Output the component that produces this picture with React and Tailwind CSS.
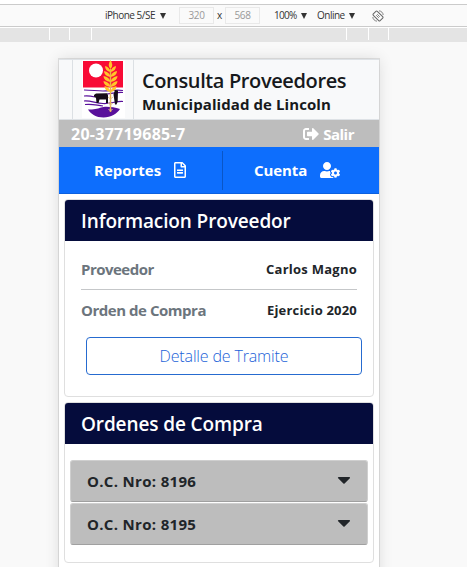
import React from "react";
import { FaSignOutAlt, FaRegFileAlt, FaUserCog, FaCaretDown } from "react-icons/fa";

function Select({ label, className }) {
  return (
    <div className={`flex items-center whitespace-nowrap ${className}`}>
      <span>{label}</span>
      <svg className="ml-auto h-[6px] w-[6px]" viewBox="0 0 6 6"><path d="M0 0h6L3 6z" fill="#333" /></svg>
    </div>
  );
}

function DeviceToolbar() {
  return (
    <div className="mt-1 flex h-[23px] shrink-0 items-center border-y border-[#cbcbcb] bg-[#fafafa] text-[10px] text-[#333]">
      <Select label="iPhone 5/SE" className="ml-[105px] w-[61px] tracking-[-0.5px]" />
      <div className="ml-[13px] flex h-[17px] w-[35px] items-center justify-center border border-[#e9e9e9] text-[10px] tracking-[-0.4px] text-[#999]">320</div>
      <span className="w-[11px] text-center">x</span>
      <div className="flex h-[17px] w-[35px] items-center justify-center border border-[#e9e9e9] text-[10px] tracking-[-0.4px] text-[#999]">568</div>
      <Select label="100%" className="ml-[14px] w-[33px] tracking-[-0.7px]" />
      <Select label="Online" className="ml-[10px] w-[38px] tracking-[-0.5px]" />
      <svg className="ml-[17px] h-3 w-3" viewBox="0 0 12 12" fill="none" stroke="#666">
        <rect x="3.2" y="1.2" width="5.6" height="9.6" rx="1" transform="rotate(-45 6 6)" />
        <path d="M4.2 5.2l2.6 2.6M5.2 4.2l2.6 2.6M7 .8c2.4.3 4 1.900 4.200 4.200M5 11.200C2.600 10.900 1 9.300.8 7" strokeWidth=".8" />
      </svg>
    </div>
  );
}

function Ruler() {
  return (
    <div className="mt-px flex h-[14px] shrink-0 bg-[#e4e4e4]">
      <i className="ml-[49px] h-3 w-px bg-white" />
      <i className="ml-[19px] h-3 w-px bg-white" />
      <i className="ml-[21px] h-3 w-px bg-white" />
      <i className="ml-[254px] h-3 w-px bg-white" />
      <i className="ml-[21px] h-3 w-px bg-white" />
      <i className="ml-[19px] h-3 w-px bg-white" />
    </div>
  );
}

function Shield() {
  return (
    <svg className="h-[58px] w-[43px]" viewBox="0 0 43 58">
      <path d="M0 0h43v58H0z" fill="#fff" />
      <path d="M1 1h40v26.500H1z" fill="#f80b36" />
      <circle cx="14" cy="10.500" r="7" fill="#fff" />
      <path d="M6 49.500c6 0 9-.5 13-2s12-.8 19 1.500c-3 4.500-9 8.500-16.500 8.500S9 54 6 49.500z" fill="#59109b" />
      <path d="M2 30c8 0 12 1 19 1s12-1.500 20-.5M2 36c5-.5 7 0 11 1M25 34c6-.5 10-2 16-1.500M2 41c7-.5 11 2 19 2.500 7 .5 13-2.500 20-2M3 44.500c8-1 12 1 18 1.500" stroke="#59109b" strokeWidth="1.200" fill="none" />
      <path d="M12 35l2-1.500 11-.3 1 2v7.800h-2v-3.500h-6.500l-1 3.500h-2l-.5-5-2-1.500zM33 30l3 .5-.3 11-1.200 3h-1.500l-1.500-10z" fill="#160c18" />
      <path d="M28.500 9v43" stroke="#e8b050" strokeWidth="1.500" />
      <g fill="#ffc629">
        <path d="M28.500 0q-3.500 5 0 9 3.500-4 0-9z" />
        <path d="M28.500 12q-1-5-5.500-6 0 5 5.500 6 5.500-1 5.500-6-4.500 1-5.500 6z" />
        <path d="M28.500 17q-1-5-6.500-6 0 5 6.500 6 6.500-1 6.500-6-5.500 1-6.500 6z" />
        <path d="M28.500 22q-1-5-7-6 0 5 7 6 7-1 7-6-6 1-7 6z" />
        <path d="M28.500 27q-1-5-7-6 0 5 7 6 7-1 7-6-6 1-7 6z" />
        <path d="M28.500 32q-1-5-6-6 0 5 6 6 6-1 6-6-5 1-6 6z" />
      </g>
      <path d="M26 37l2.500 2 2.500-2M26 43l2.500 2 2.500-2M26.500 49l2 2 2-2" stroke="#e8c690" fill="none" />
    </svg>
  );
}

function Card({ title, className, children }) {
  return (
    <section className={`mx-[5px] overflow-hidden rounded border border-[#dfdfdf] bg-white ${className}`}>
      <h2 className="flex h-[41px] items-center bg-[#050c3c] pt-[2px] pl-4 text-[19px] font-semibold tracking-[-0.12px] whitespace-nowrap text-white">{title}</h2>
      {children}
    </section>
  );
}

function Order({ number }) {
  return (
    <div className="flex h-[42px] items-center justify-between rounded-[3px] border border-[#cfcfcf] border-b-[#a0a0a0] bg-[#bdbdbd] px-4 text-[15px] font-bold text-[#212529]">
      <span className="tracking-[0.32px]">O.C. Nro: {number}</span>
      <FaCaretDown className="-mr-[3px] mb-[3px] h-[21px] w-[20px]" />
    </div>
  );
}

export default function App() {
  return (
    <div className="flex h-[567px] w-[467px] flex-col overflow-hidden bg-white font-['Open_Sans','Noto_Sans',sans-serif]">
      <DeviceToolbar />
      <Ruler />
      <div className="min-h-0 flex-1 bg-[#f9f9f9] pt-[17px] pl-[59px]">
        <main className="h-[540px] w-[320px] bg-white shadow-[0_0_14px_rgba(0,0,0,0.12),0_0_0_1px_#e2e2e2]">
          <header className="flex h-[61px] border-y border-[#dee2e6] bg-[#f8f9fa]">
            <div className="ml-[13px] flex w-[62px] border-x border-[#dce0e4] pl-[9px]"><Shield /></div>
            <div className="ml-2 whitespace-nowrap text-[#17191c]">
              <h1 className="mt-[8px] text-[20px] leading-[26px] font-semibold tracking-[-0.38px]">Consulta Proveedores</h1>
              <p className="text-[15px] leading-[21px] font-bold tracking-[0.08px]">Municipalidad de Lincoln</p>
            </div>
          </header>
          <div className="flex h-[27px] items-center justify-between bg-[#bdbdbd] pr-[25px] pl-3 text-[15px] font-bold text-white">
            <span className="text-[16px] tracking-[0.26px]">20-37719685-7</span>
            <span className="flex items-center gap-1 pt-px"><FaSignOutAlt className="size-4" /><span className="tracking-[-0.5px]">Salir</span></span>
          </div>
          <nav className="flex h-[47px] items-center border-b border-[#0b60df] bg-[#0d6efd] text-[15px] font-bold text-white">
            <div className="flex h-[39px] w-[164px] items-center border-r border-[#0a56c6] pl-[35px]">
              <span>Reportes</span><FaRegFileAlt className="mr-[34px] ml-auto size-4" />
            </div>
            <div className="flex flex-1 items-center pr-[39px] pl-[31px]">
              <span className="tracking-[-0.1px]">Cuenta</span><FaUserCog className="ml-auto h-4 w-5" />
            </div>
          </nav>
          <Card title="Informacion Proveedor" className="mt-[5px] h-[198px]">
            <div className="mx-4 flex h-[49px] items-center justify-between border-b border-[#c5c7c9] pt-[9px] whitespace-nowrap">
              <span className="text-[15px] font-bold tracking-[-0.52px] text-[#6c757d]">Proveedor</span>
              <span className="pt-px text-[13px] font-bold tracking-[0.25px] text-[#212529]">Carlos Magno</span>
            </div>
            <div className="mx-4 flex h-[42px] items-center justify-between whitespace-nowrap">
              <span className="pb-[2px] text-[15px] font-bold tracking-[-0.47px] text-[#6c757d]">Orden de Compra</span>
              <span className="text-[13px] font-bold tracking-[0.2px] text-[#212529]">Ejercicio 2020</span>
            </div>
            <button className="mt-[5px] ml-[21px] block h-[38px] w-[276px] rounded border border-[#266bd0] text-[16px] font-light tracking-[-0.15px] text-[#1b62d8]">Detalle de Tramite</button>
          </Card>
          <Card title="Ordenes de Compra" className="mt-[5px] h-[161px]">
            <div className="mr-[5px] ml-[5px] flex flex-col gap-px pt-4">
              <Order number="8196" />
              <Order number="8195" />
            </div>
          </Card>
        </main>
      </div>
    </div>
  );
}
